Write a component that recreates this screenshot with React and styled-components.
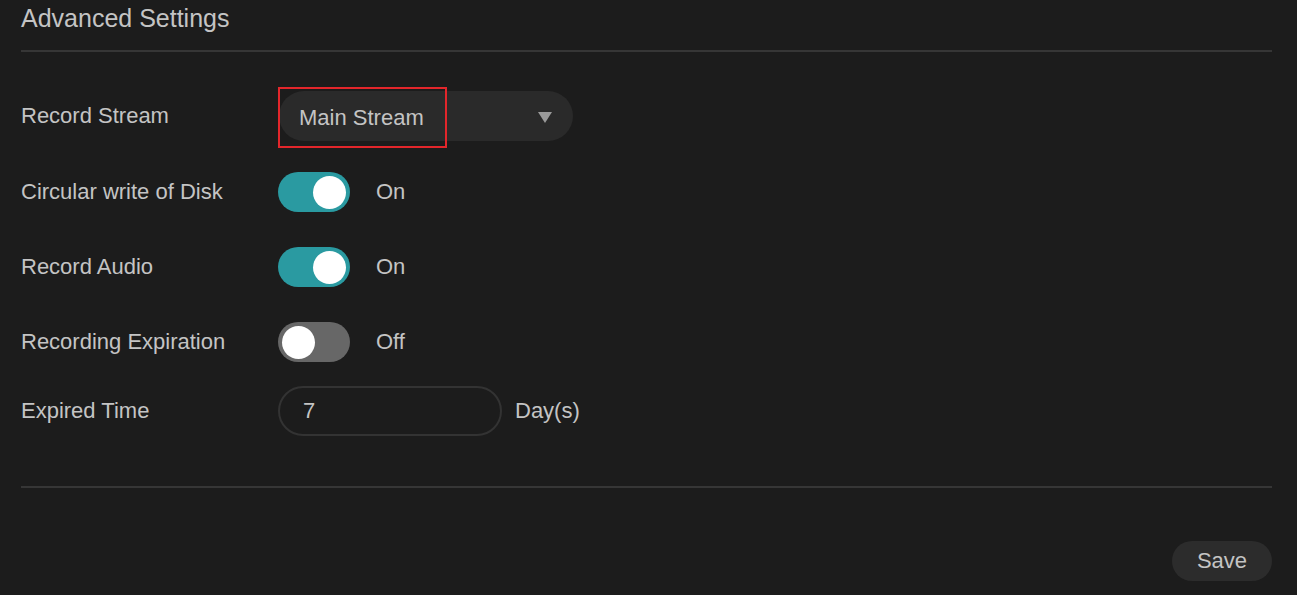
import React from "react";
import styled, { createGlobalStyle } from "styled-components";

const Global = createGlobalStyle`
  html, body { margin: 0; padding: 0; background: #1c1c1c; }
  body { font-family: Arial, "Liberation Sans", sans-serif; color: #c4c4c4; }
  * { box-sizing: border-box; }
`;

const Page = styled.div`
  width: 1297px;
  height: 595px;
  background: #1c1c1c;
  padding: 0 25px 0 21px;
  display: flex;
  flex-direction: column;
  overflow: hidden;
`;

const Title = styled.h2`
  margin: 0;
  height: 39px;
  padding-top: 4px;
  font-size: 25px;
  font-weight: normal;
  line-height: 28px;
  color: #c4c4c4;
`;

const Divider = styled.div`
  height: 2px;
  background: #363636;
  margin-top: ${(p) => p.$mt || 0}px;
`;

const Form = styled.div`
  display: flex;
  flex-direction: column;
  padding-top: 39px;
`;

const Row = styled.div`
  display: grid;
  grid-template-columns: 257px auto auto;
  grid-template-rows: ${(p) => p.$h}px;
  align-items: center;
  height: ${(p) => p.$h}px;
  justify-content: start;
`;

const Label = styled.span`
  font-size: 22px;
  color: #c4c4c4;
`;

const SelectWrap = styled.div`
  position: relative;
  width: 294px;
  height: 50px;
  border-radius: 25px;
  background: #2a2a2a;
  display: flex;
  align-items: center;
  justify-content: space-between;
  padding: 0 21px 0 20px;
  margin-left: 1px;
  font-size: 22px;
  color: #c4c4c4;
`;

const SelectValue = styled.span`
  padding-top: 3px;
`;

const Highlight = styled.div`
  position: absolute;
  left: -1px;
  top: -4px;
  width: 169px;
  height: 61px;
  border: 2px solid #e3262b;
  pointer-events: none;
`;

const Arrow = styled.span`
  width: 0;
  height: 0;
  border-left: 7px solid transparent;
  border-right: 7px solid transparent;
  border-top: 11px solid #9a9a9a;
  margin-top: 2px;
`;

const Track = styled.div`
  position: relative;
  width: 72px;
  height: 40px;
  border-radius: 20px;
  background: ${(p) => (p.$on ? "#2a9aa1" : "#676767")};
`;

const Knob = styled.div`
  position: absolute;
  top: 3.5px;
  left: ${(p) => (p.$on ? "35px" : "3.5px")};
  width: 33px;
  height: 33px;
  border-radius: 50%;
  background: #ffffff;
`;

const State = styled.span`
  font-size: 22px;
  color: #c4c4c4;
  margin-left: ${(p) => p.$ml || 26}px;
`;

const Input = styled.div`
  width: 224px;
  height: 50px;
  border-radius: 25px;
  border: 2px solid #333333;
  display: flex;
  align-items: center;
  padding-left: 23px;
  font-size: 22px;
  color: #c4c4c4;
`;

const Footer = styled.div`
  display: flex;
  justify-content: flex-end;
  padding-top: 53px;
`;

const SaveButton = styled.button`
  width: 100px;
  height: 40px;
  border-radius: 20px;
  border: none;
  background: #2c2c2c;
  color: #c4c4c4;
  font-family: Arial, "Liberation Sans", sans-serif;
  font-size: 22px;
  padding: 0;
`;

function Toggle({ on }) {
  return (
    <Track $on={on}>
      <Knob $on={on} />
    </Track>
  );
}

export default function App() {
  return (
    <>
      <Global />
      <Page>
        <Title>Advanced Settings</Title>
        <Divider $mt={11} />
        <Form>
          <Row $h={50}>
            <Label>Record Stream</Label>
            <SelectWrap>
              <SelectValue>Main Stream</SelectValue>
              <Arrow />
              <Highlight />
            </SelectWrap>
          </Row>
          <Row $h={102}>
            <Label>Circular write of Disk</Label>
            <Toggle on />
            <State>On</State>
          </Row>
          <Row $h={48}>
            <Label>Record Audio</Label>
            <Toggle on />
            <State>On</State>
          </Row>
          <Row $h={102}>
            <Label>Recording Expiration</Label>
            <Toggle on={false} />
            <State>Off</State>
          </Row>
          <Row $h={36}>
            <Label>Expired Time</Label>
            <Input>7</Input>
            <State $ml={13}>Day(s)</State>
          </Row>
        </Form>
        <Divider $mt={57} />
        <Footer>
          <SaveButton>Save</SaveButton>
        </Footer>
      </Page>
    </>
  );
}
